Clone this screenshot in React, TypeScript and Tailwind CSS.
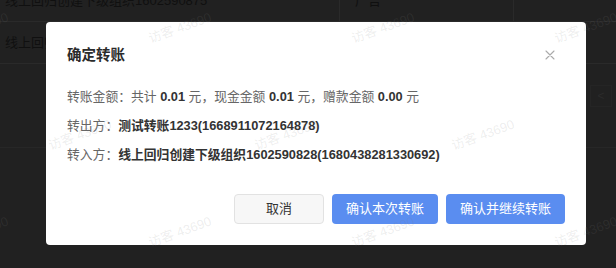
import React from "react";

const marks: { x: number; y: number }[] = [
  { x: -23, y: 28 }, { x: 180, y: 28 }, { x: 383, y: 28 }, { x: 586, y: 28 },
  { x: 80, y: 135 }, { x: 286, y: 135 }, { x: 483, y: 135 },
  { x: -23, y: 232 }, { x: 180, y: 232 }, { x: 383, y: 232 }, { x: 586, y: 232 },
];

export default function App() {
  return (
    <div
      className="relative w-[616px] h-[268px] overflow-hidden bg-[#212121] text-[13px]"
      style={{ fontFamily: '"Liberation Sans", "Noto Sans CJK SC", sans-serif' }}
    >
      {/* background table (masked) */}
      <div className="mt-[-20px] flex flex-col">
        <div className="h-[42px] flex border-b border-[#2a2a2a]">
          <div className="w-[340px] pl-[5px] flex items-center text-[#101010] border-r border-[#2a2a2a]">线上回归创建下级组织1602590875</div>
          <div className="w-[174px] pl-[15px] flex items-center text-[#101010] border-r border-[#2a2a2a]">广告</div>
          <div className="flex-1" />
        </div>
        <div className="h-[42px] flex items-center pl-[5px] text-[#101010] border-b border-[#2a2a2a]">线上回归创建下级组织</div>
        <div className="h-[84px] flex justify-end border-b border-[#272727]">
          <div className="mt-[21px] mr-[4px] w-[22px] h-[22px] border border-[#252525] flex items-center justify-center text-[#2b2b2b] text-[12px]">&lt;</div>
        </div>
      </div>

      {/* dialog */}
      <div className="absolute left-[46px] top-[22px] w-[540px] h-[223px] bg-white rounded-[4px] px-[21px] pt-[22px] pb-[21px] flex flex-col">
        <div className="flex items-center justify-between h-[22px]">
          <div className="text-[14.5px] font-bold text-[#2b2b2b] leading-[22px]">确定转账</div>
          <svg width="10" height="10" viewBox="0 0 10 10" className="mr-[10px]">
            <path d="M1 1 L9 9 M9 1 L1 9" stroke="#aaaaaa" strokeWidth="1.1" strokeLinecap="round" />
          </svg>
        </div>
        <div className="mt-[21px] flex flex-col gap-[9px] text-[#666] text-[12.8px] leading-[20px]">
          <div>
            转账金额：共计 <b className="text-[#333]">0.01</b> 元，现金金额 <b className="text-[#333]">0.01</b> 元，赠款金额 <b className="text-[#333]">0.00</b> 元
          </div>
          <div>
            转出方：<b className="text-[#333]">测试转账1233(1668911072164878)</b>
          </div>
          <div>
            转入方：<b className="text-[#333]">线上回归创建下级组织1602590828(1680438281330692)</b>
          </div>
        </div>
        <div className="mt-auto flex justify-end gap-[8px]">
          <button className="w-[90px] h-[30px] rounded-[4px] bg-[#f7f7f7] border border-[#e2e2e2] text-[#333] text-[13px]">取消</button>
          <button className="w-[106px] h-[30px] rounded-[4px] bg-[#5a8df0] text-white text-[13px]">确认本次转账</button>
          <button className="w-[119px] h-[30px] rounded-[4px] bg-[#5a8df0] text-white text-[13px]">确认并继续转账</button>
        </div>
      </div>

      {/* watermark overlay */}
      <div className="absolute inset-0 pointer-events-none">
        {marks.map((m, i) => (
          <span
            key={i}
            className="absolute whitespace-nowrap text-[13px] text-[rgba(128,128,128,0.14)] -translate-x-1/2 -translate-y-1/2 -rotate-[20deg]"
            style={{ left: m.x, top: m.y }}
          >
            访客 43690
          </span>
        ))}
      </div>
    </div>
  );
}
